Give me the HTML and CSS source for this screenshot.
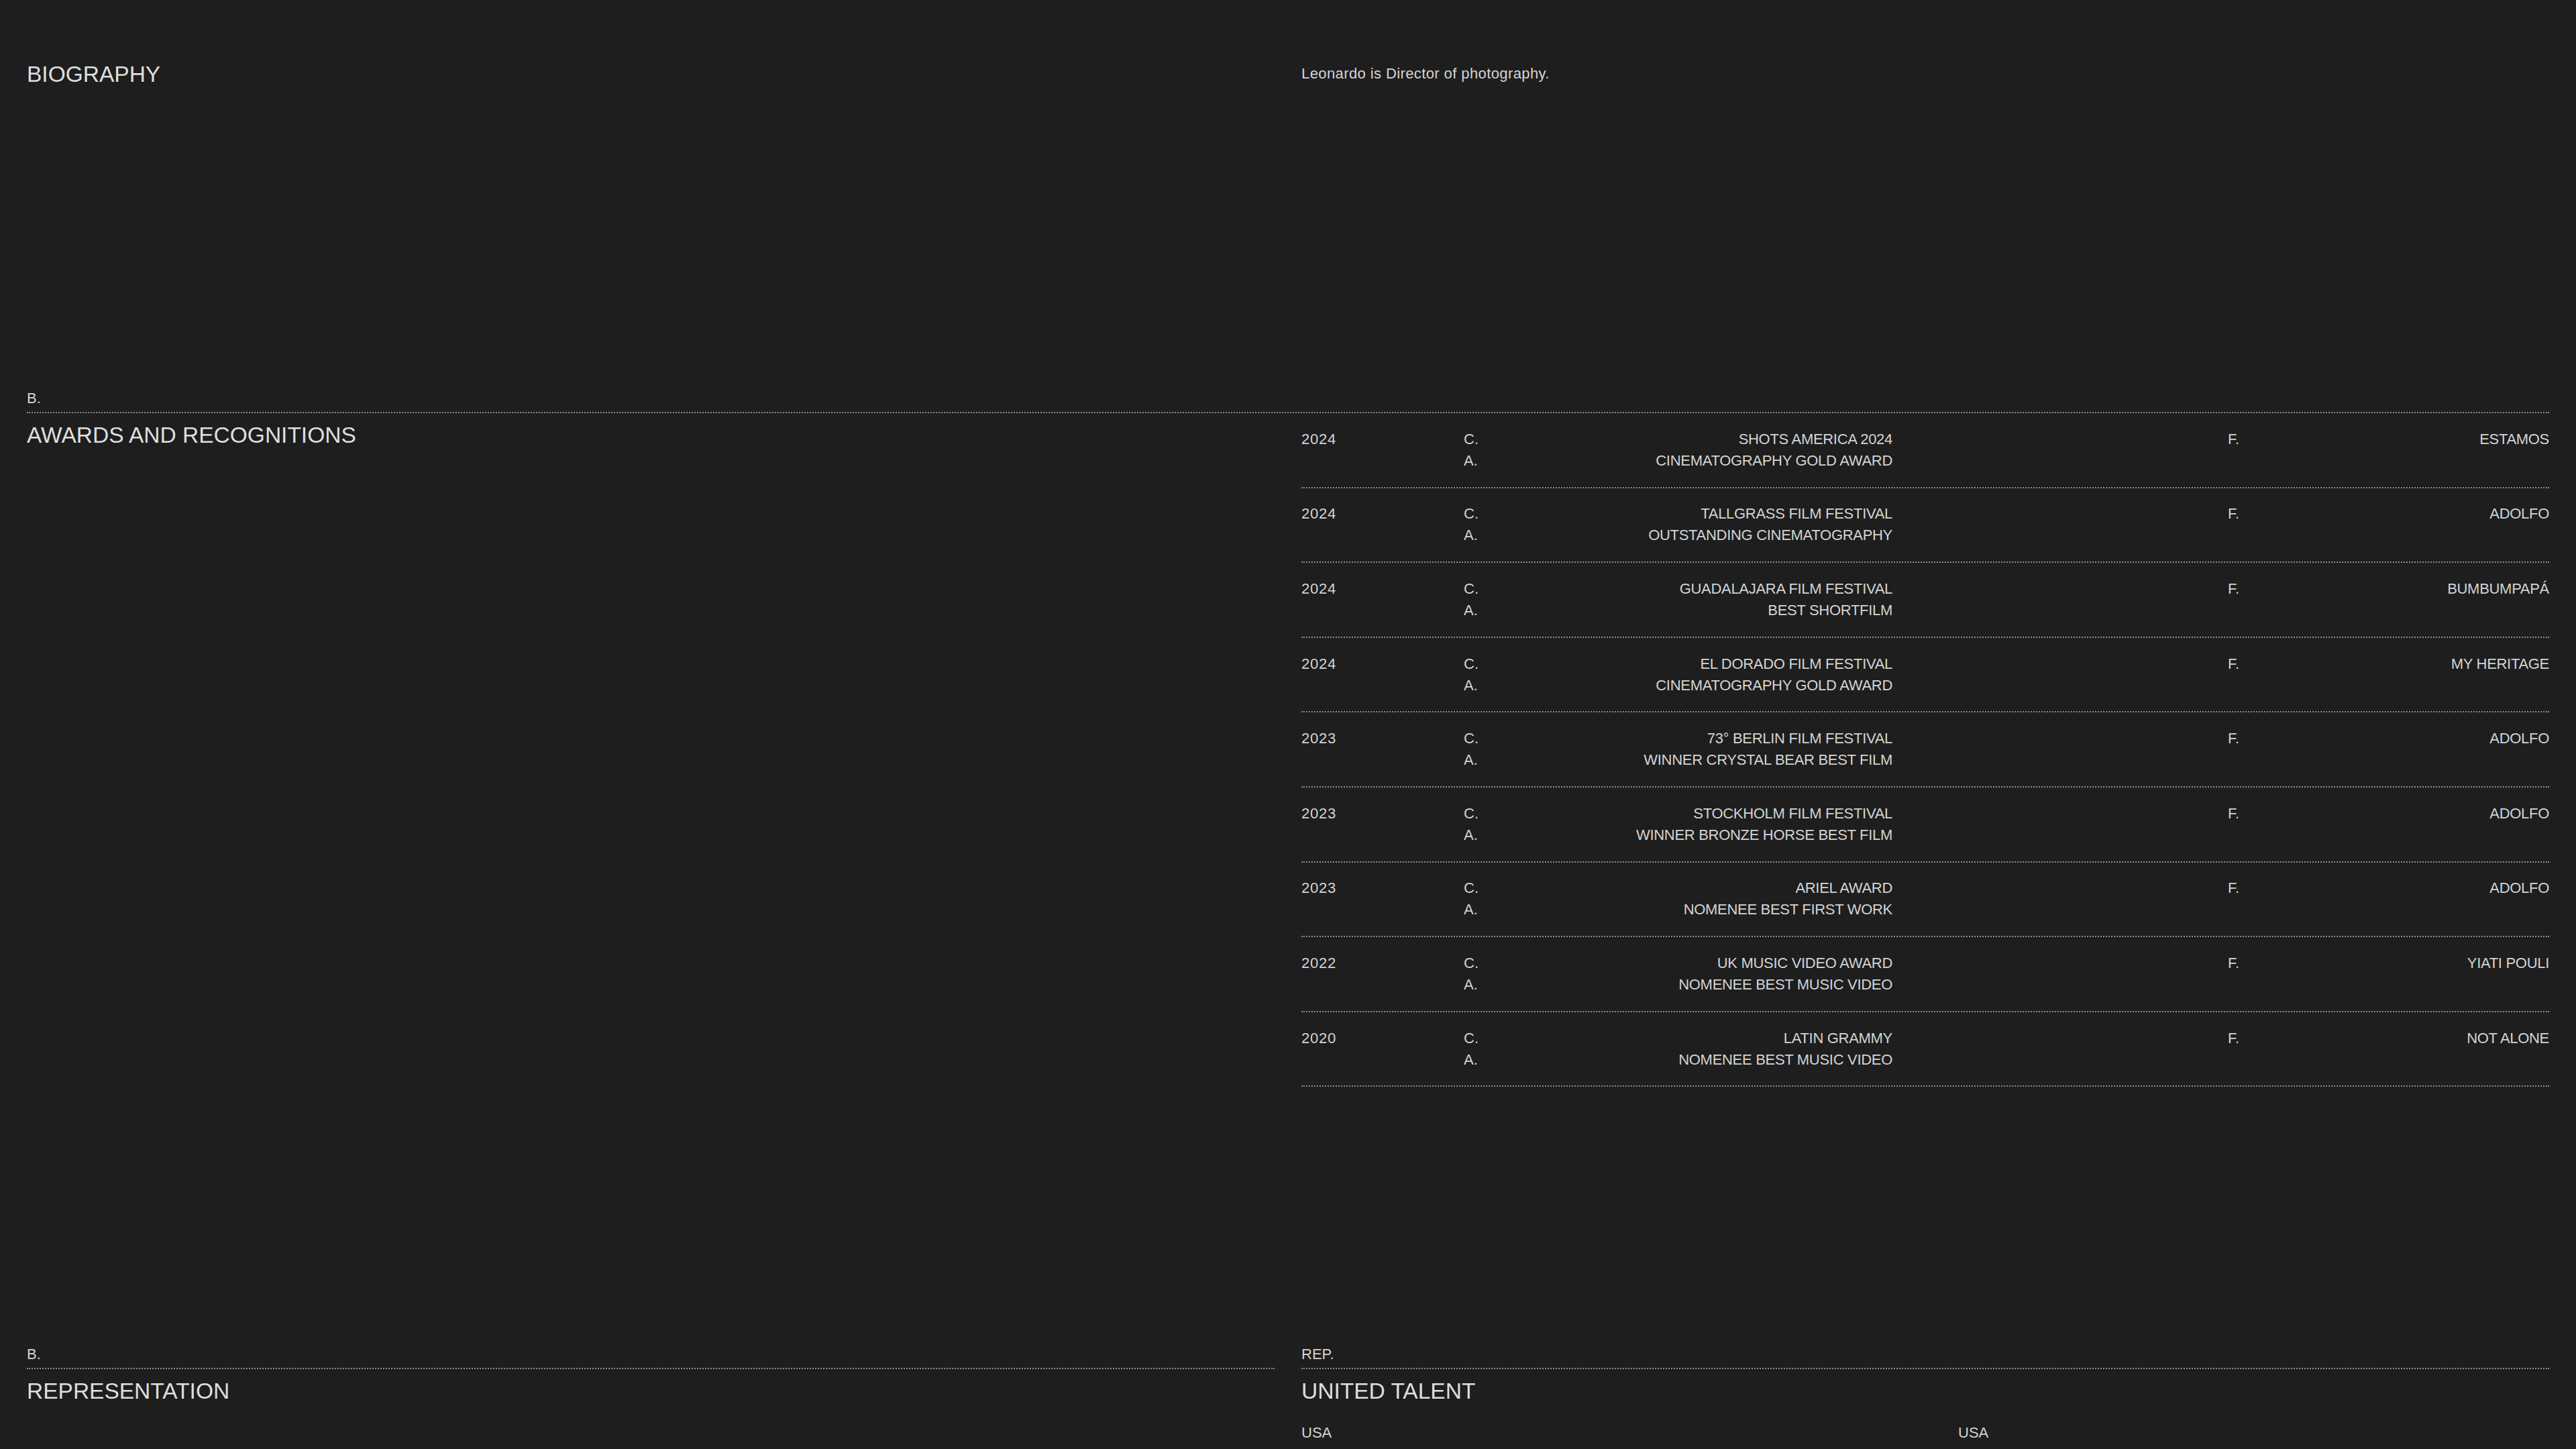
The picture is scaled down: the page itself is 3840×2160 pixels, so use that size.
FILE: index.html
```html
<!DOCTYPE html>
<html lang="en">
<head>
<meta charset="utf-8">
<title>Leonardo — Biography</title>
<link rel="stylesheet" href="styles.css">
</head>
<body>
<main class="page">
  <section class="bio">
    <h2 class="heading">BIOGRAPHY</h2>
    <p class="bio-text">Leonardo is Director of photography.</p>
  </section>

  <section class="awards">
    <div class="section-head">
      <span class="label">B.</span>
    </div>
    <div class="two-col">
      <h2 class="heading heading-pad">AWARDS AND RECOGNITIONS</h2>
      <ul class="award-list">
        <li class="award">
          <span class="year">2024</span>
          <div class="award-main"><span class="key">C.</span><span class="val">SHOTS AMERICA 2024</span><span class="key">A.</span><span class="val">CINEMATOGRAPHY GOLD AWARD</span></div>
          <div class="award-film"><span class="key">F.</span><span class="val">ESTAMOS</span></div>
        </li>
        <li class="award">
          <span class="year">2024</span>
          <div class="award-main"><span class="key">C.</span><span class="val">TALLGRASS FILM FESTIVAL</span><span class="key">A.</span><span class="val">OUTSTANDING CINEMATOGRAPHY</span></div>
          <div class="award-film"><span class="key">F.</span><span class="val">ADOLFO</span></div>
        </li>
        <li class="award">
          <span class="year">2024</span>
          <div class="award-main"><span class="key">C.</span><span class="val">GUADALAJARA FILM FESTIVAL</span><span class="key">A.</span><span class="val">BEST SHORTFILM</span></div>
          <div class="award-film"><span class="key">F.</span><span class="val">BUMBUMPAPÁ</span></div>
        </li>
        <li class="award">
          <span class="year">2024</span>
          <div class="award-main"><span class="key">C.</span><span class="val">EL DORADO FILM FESTIVAL</span><span class="key">A.</span><span class="val">CINEMATOGRAPHY GOLD AWARD</span></div>
          <div class="award-film"><span class="key">F.</span><span class="val">MY HERITAGE</span></div>
        </li>
        <li class="award">
          <span class="year">2023</span>
          <div class="award-main"><span class="key">C.</span><span class="val">73° BERLIN FILM FESTIVAL</span><span class="key">A.</span><span class="val">WINNER CRYSTAL BEAR BEST FILM</span></div>
          <div class="award-film"><span class="key">F.</span><span class="val">ADOLFO</span></div>
        </li>
        <li class="award">
          <span class="year">2023</span>
          <div class="award-main"><span class="key">C.</span><span class="val">STOCKHOLM FILM FESTIVAL</span><span class="key">A.</span><span class="val">WINNER BRONZE HORSE BEST FILM</span></div>
          <div class="award-film"><span class="key">F.</span><span class="val">ADOLFO</span></div>
        </li>
        <li class="award">
          <span class="year">2023</span>
          <div class="award-main"><span class="key">C.</span><span class="val">ARIEL AWARD</span><span class="key">A.</span><span class="val">NOMENEE BEST FIRST WORK</span></div>
          <div class="award-film"><span class="key">F.</span><span class="val">ADOLFO</span></div>
        </li>
        <li class="award">
          <span class="year">2022</span>
          <div class="award-main"><span class="key">C.</span><span class="val">UK MUSIC VIDEO AWARD</span><span class="key">A.</span><span class="val">NOMENEE BEST MUSIC VIDEO</span></div>
          <div class="award-film"><span class="key">F.</span><span class="val">YIATI POULI</span></div>
        </li>
        <li class="award">
          <span class="year">2020</span>
          <div class="award-main"><span class="key">C.</span><span class="val">LATIN GRAMMY</span><span class="key">A.</span><span class="val">NOMENEE BEST MUSIC VIDEO</span></div>
          <div class="award-film"><span class="key">F.</span><span class="val">NOT ALONE</span></div>
        </li>
      </ul>
    </div>
  </section>

  <section class="rep">
    <div class="two-col">
      <div class="section-head"><span class="label">B.</span></div>
      <div class="section-head"><span class="label">REP.</span></div>
    </div>
    <div class="two-col">
      <h2 class="heading heading-pad">REPRESENTATION</h2>
      <div class="agency">
        <h2 class="heading heading-pad">UNITED TALENT</h2>
        <div class="offices">
          <span>USA</span>
          <span>USA</span>
        </div>
      </div>
    </div>
  </section>
</main>
</body>
</html>
```
FILE: styles.css
```css
* {
  box-sizing: border-box;
}

html,
body {
  margin: 0;
  padding: 0;
  background: #1e1e1e;
}

body {
  color: #d4d4d4;
  font-family: "Liberation Sans", Arial, sans-serif;
  font-size: 22px;
  line-height: 32px;
}

.page {
  padding: 0 40px;
}

.two-col {
  display: grid;
  grid-template-columns: 1fr 1fr;
  column-gap: 40px;
}

.heading {
  margin: 0;
  font-size: 33.5px;
  line-height: 40px;
  font-weight: 400;
  color: #dedede;
}

.heading-pad {
  padding-top: 13px;
}

/* Biography */
.bio {
  min-height: 578px;
  padding-top: 91px;
  display: grid;
  grid-template-columns: 1fr 1fr;
  column-gap: 40px;
  align-content: start;
}

.bio-text {
  margin: 3px 0 0;
  letter-spacing: 0.4px;
}

/* Section header: label above dotted rule */
.section-head {
  padding-bottom: 4px;
  border-bottom: 2px dotted #8c8c8c;
}

.label {
  display: block;
  height: 32px;
}

/* Awards */
.awards {
  min-height: 1425px;
}

.award-list {
  list-style: none;
  margin: 0;
  padding: 0;
}

.award {
  display: grid;
  grid-template-columns: 242px 639px 500px 1fr;
  padding: 22.8px 0;
  border-bottom: 2px dotted #8c8c8c;
}

.year {
  letter-spacing: 0.8px;
}

.award-main,
.award-film {
  display: grid;
  grid-template-columns: auto 1fr;
  align-content: start;
}

.award-film {
  grid-column: 4;
}

.val {
  text-align: right;
  letter-spacing: -0.3px;
}

/* Representation */
.offices {
  display: grid;
  grid-template-columns: 979px 1fr;
  margin-top: 26px;
}
```
